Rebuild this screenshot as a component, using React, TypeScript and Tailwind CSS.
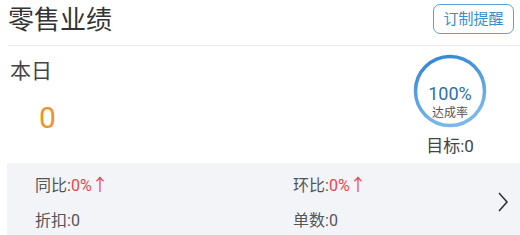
import React from "react";

const font = { fontFamily: 'Roboto, "Noto Sans CJK SC", sans-serif' };
const cjk = { fontFamily: '"Noto Sans CJK SC", sans-serif' };

function Ring() {
  return (
    <svg width="74" height="74" viewBox="0 0 74 74">
      <defs>
        <linearGradient id="rg" x1="0" y1="0" x2="0.3" y2="1">
          <stop offset="0%" stopColor="#2f82d4" />
          <stop offset="100%" stopColor="#7ab8ea" />
        </linearGradient>
      </defs>
      <circle cx="37" cy="37" r="34.5" fill="none" stroke="url(#rg)" strokeWidth="3.5" />
    </svg>
  );
}

export default function App() {
  return (
    <div className="w-[520px] h-[235px] bg-white overflow-hidden flex flex-col" style={font}>
      {/* header */}
      <div className="h-[38px] flex items-center justify-between pl-[8px] pr-[6px] pt-[1px]">
        <div className="text-[26px] leading-none text-[#333333]">零售业绩</div>
        <div className="w-[81px] h-[30px] mt-[-1px] rounded-[7px] border border-[#5b9fd6] flex items-center justify-center text-[15px] leading-none text-[#3a8ccc]">
          订制提醒
        </div>
      </div>
      <div className="mt-[7px] ml-[8px] h-px bg-[#ededed]" />

      {/* middle */}
      <div className="h-[117px] flex justify-between">
        <div className="flex flex-col pl-[10px] pt-[15px]">
          <div className="text-[21px] leading-none text-[#444444]">本日</div>
          <div className="mt-[21px] ml-[29px] text-[30px] leading-none text-[#f0912d]">0</div>
        </div>
        <div className="flex flex-col items-center w-[80px] mr-[30px] pt-[8px]">
          <div className="relative w-[74px] h-[74px]">
            <Ring />
            <div className="absolute inset-0 flex flex-col items-center pt-[31px]">
              <div className="text-[18px] leading-none text-[#2d6fae]">100%</div>
              <div className="text-[12px] leading-none text-[#555555] mt-[4px]">达成率</div>
            </div>
          </div>
          <div className="mt-[10px] text-[17px] leading-none text-[#444444]">目标:0</div>
        </div>
      </div>

      {/* bottom */}
      <div className="flex-1 ml-[7px] bg-[#f3f4f8] flex items-center">
        <div className="flex-1 grid grid-cols-[258px_1fr] gap-y-[19px] pl-[28px] mt-[6px] text-[16px] leading-none text-[#555555]">
          <div>
            同比:<span className="text-[#e8464a]">0%<span style={cjk} className="text-[17px]">↑</span></span>
          </div>
          <div>
            环比:<span className="text-[#e8464a]">0%<span style={cjk} className="text-[17px]">↑</span></span>
          </div>
          <div>折扣:0</div>
          <div>单数:0</div>
        </div>
        <svg width="14" height="24" viewBox="0 0 14 24" className="mr-[10px] mt-[6px]">
          <path d="M3 3 L11 12 L3 21" fill="none" stroke="#333333" strokeWidth="1.6" />
        </svg>
      </div>
    </div>
  );
}
